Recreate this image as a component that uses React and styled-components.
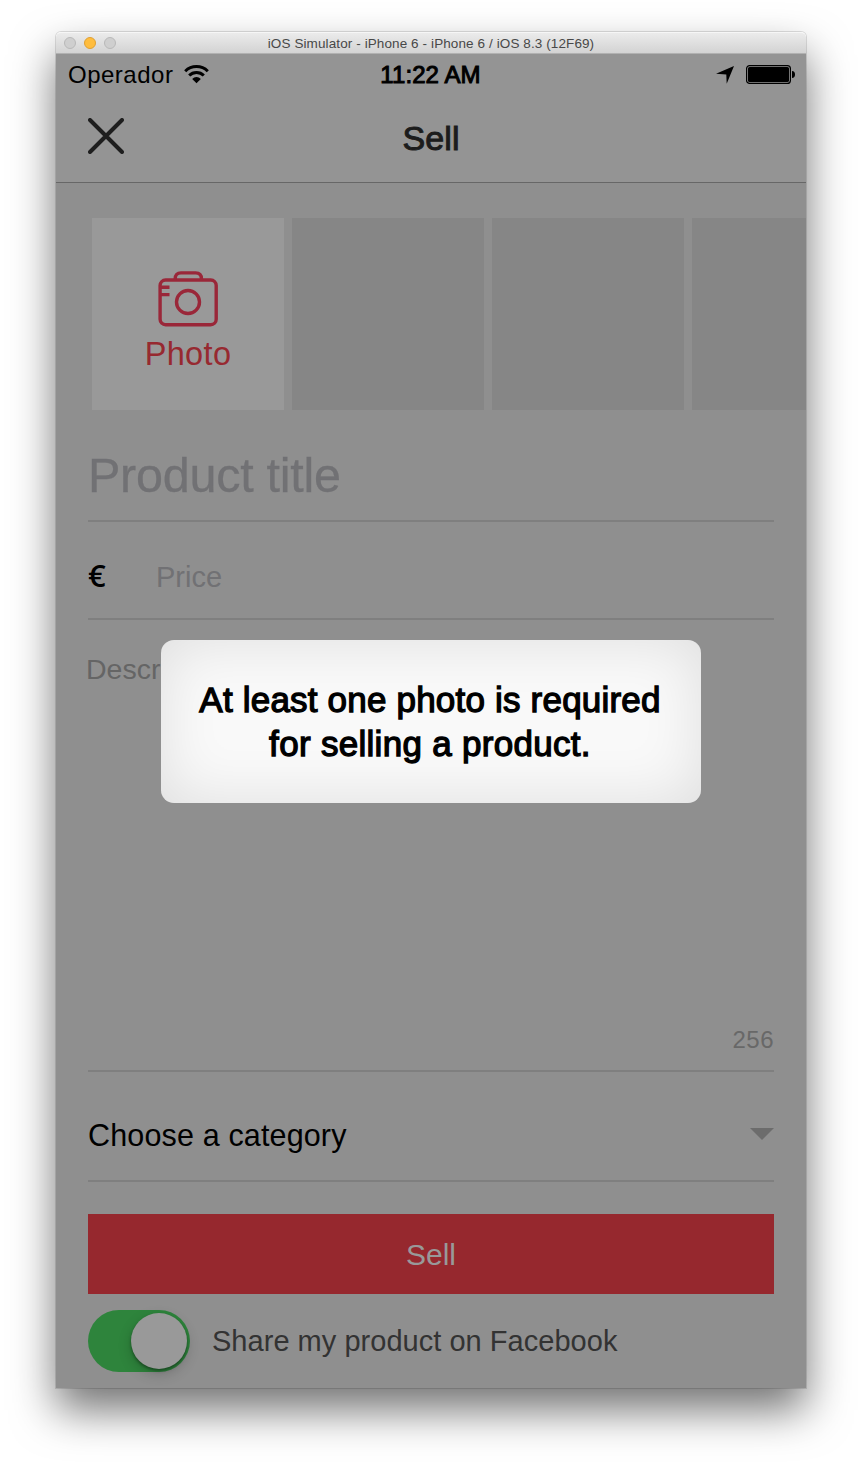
import React from 'react';
import styled, { createGlobalStyle } from 'styled-components';

const GlobalStyle = createGlobalStyle`
  * { box-sizing: border-box; }
  body {
    margin: 0;
    background: #fff;
    font-family: "Liberation Sans", Arial, sans-serif;
  }
`;

const Desktop = styled.main`
  width: 862px;
  height: 1468px;
  padding: 32px 56px 80px;
  overflow: hidden;
`;

const Window = styled.div`
  width: 750px;
  height: 1356px;
  border-radius: 5px 5px 0 0;
  box-shadow: 0 0 0 1px rgba(0, 0, 0, 0.12), 0 22px 44px rgba(0, 0, 0, 0.55);
`;

const TitleBar = styled.header`
  position: relative;
  height: 22px;
  display: flex;
  align-items: center;
  justify-content: center;
  padding-top: 2px;
  border-radius: 5px 5px 0 0;
  background: linear-gradient(#ebebeb, #d3d3d3);
  border-top: 1px solid #f6f6f6;
  border-bottom: 1px solid #b1b1b1;
`;

const Lights = styled.div`
  position: absolute;
  left: 8px;
  top: 4px;
  display: flex;
  gap: 8px;
`;

const Light = styled.span`
  width: 12px;
  height: 12px;
  border-radius: 50%;
  background: ${(p) => (p.$on ? '#ffbd3e' : '#cfcfcf')};
  border: 1px solid ${(p) => (p.$on ? '#e0a032' : '#b9b9b9')};
`;

const Label = styled.span`
  font-size: ${(p) => p.$size}px;
  line-height: 1;
  color: ${(p) => p.$color || '#000'};
  letter-spacing: ${(p) => p.$track || 0}px;
  -webkit-text-stroke: ${(p) => p.$stroke || 0}px currentColor;
  white-space: nowrap;
`;

const Screen = styled.div`
  position: relative;
  height: 1334px;
  display: flex;
  flex-direction: column;
  overflow: hidden;
  background: #8f8f8f;
`;

const StatusBar = styled.div`
  height: 40px;
  display: grid;
  grid-template-columns: 1fr auto 1fr;
  align-items: center;
  padding: 1px 11px 0 12px;
  background: #949494;
`;

const StatusGroup = styled.div`
  display: flex;
  align-items: center;
  justify-content: ${(p) => (p.$end ? 'flex-end' : 'flex-start')};
  gap: ${(p) => p.$gap}px;
`;

const Clock = styled(Label)`
  margin-right: 2px;
`;

const NavBar = styled.div`
  height: 89px;
  display: grid;
  grid-template-columns: 1fr auto 1fr;
  align-items: center;
  padding: 0 32px;
  background: #949494;
  border-bottom: 1px solid #676767;
`;

const CloseIcon = styled.svg`
  display: block;
  margin-bottom: 4px;
`;

const PhotoStrip = styled.div`
  display: flex;
  flex: none;
  gap: 8px;
  padding: 35px 0 0 36px;
`;

const Tile = styled.div`
  flex: none;
  width: 192px;
  height: 192px;
  display: flex;
  flex-direction: column;
  align-items: center;
  padding-top: 52px;
  gap: 11px;
  background: ${(p) => (p.$active ? '#999' : '#868686')};
`;

const Form = styled.div`
  display: flex;
  flex-direction: column;
  padding: 0 32px;
`;

const Field = styled.div`
  height: ${(p) => p.$height}px;
  display: flex;
  align-items: center;
  padding-top: ${(p) => p.$top}px;
  border-bottom: 2px solid #7f7f7f;
`;

const Currency = styled.span`
  width: 68px;
  padding-bottom: 3px;
  font: 600 31px/1 "Open Sans", "Noto Sans", sans-serif;
`;

const DescriptionField = styled.div`
  height: 452px;
  display: flex;
  flex-direction: column;
  justify-content: space-between;
  padding: 35px 0 18px;
  border-bottom: 2px solid #7f7f7f;
`;

const Hint = styled(Label)`
  margin-left: -2px;
`;

const Counter = styled(Label)`
  align-self: flex-end;
`;

const Caret = styled.svg`
  margin: 0 0 2px auto;
`;

const SellButton = styled.button`
  height: 80px;
  margin: 32px 0 16px;
  padding: 1px 0 0;
  border: 0;
  background: #96282e;
  font-family: inherit;
`;

const ShareRow = styled.div`
  display: flex;
  align-items: center;
  gap: 22px;
`;

const Toggle = styled.div`
  width: 102px;
  height: 62px;
  padding: 3px;
  display: flex;
  justify-content: flex-end;
  border-radius: 31px;
  background: #2e843c;
`;

const Knob = styled.div`
  width: 56px;
  height: 56px;
  border-radius: 50%;
  background: #999;
  box-shadow: 0 2px 3px rgba(0, 0, 0, 0.35), 0 5px 14px rgba(0, 0, 0, 0.2);
`;

const Alert = styled.div`
  position: absolute;
  left: 105px;
  top: 586px;
  width: 540px;
  height: 163px;
  display: flex;
  flex-direction: column;
  align-items: center;
  padding: 42px 2px 0 0;
  gap: 9px;
  border-radius: 13px;
  background: #f9f9f9;
  box-shadow: inset 0 0 60px rgba(0, 0, 0, 0.11);
`;

const Wifi = () => (
  <svg width="25" height="19" viewBox="0 0 25 19">
    <g fill="none" stroke="#000" strokeWidth="3">
      <path d="M1.2 6.2a16.2 16.2 0 0 1 22.6 0" />
      <path d="M5.2 10.5a10.3 10.3 0 0 1 14.6 0" />
    </g>
    <path d="M12.5 18.3 8.2 13.9a6 6 0 0 1 8.6 0z" />
  </svg>
);

const LocationArrow = () => (
  <svg width="18" height="18" viewBox="0 0 18 18">
    <path d="M18 0 10.7 17.8 10.3 8.4 0 7.7z" />
  </svg>
);

const Battery = () => (
  <svg width="49" height="19" viewBox="0 0 49 19">
    <rect x=".6" y=".6" width="43.8" height="17.8" rx="3" fill="none" stroke="#000" strokeWidth="1.2" />
    <rect x="2" y="2" width="41" height="15" rx="1.6" />
    <path d="M46 6q3 .3 3 3.5T46 13z" />
  </svg>
);

const Camera = () => (
  <svg width="60" height="57" viewBox="0 0 60 57" fill="none" stroke="#9a2739" strokeWidth="3.4">
    <rect x="2.1" y="10" width="56.1" height="44.7" rx="5.5" />
    <path d="M17.2 10V8.8Q17.2 2.9 23 2.9H37.6Q43.4 2.9 43.4 8.8V10" />
    <circle cx="30" cy="32" r="11.5" />
    <path d="M2 17.3H11.5M2 24.6H11.5" />
  </svg>
);

export default function App() {
  return (
    <Desktop>
      <GlobalStyle />
      <Window>
        <TitleBar>
          <Lights>
            <Light />
            <Light $on />
            <Light />
          </Lights>
          <Label $size={13.5} $track={0.1} $color="#484848">
            iOS Simulator - iPhone 6 - iPhone 6 / iOS 8.3 (12F69)
          </Label>
        </TitleBar>
        <Screen>
          <StatusBar>
            <StatusGroup $gap={11}>
              <Label $size={24} $track={0.5}>Operador</Label>
              <Wifi />
            </StatusGroup>
            <Clock $size={24} $stroke={1} $track={0.1}>11:22 AM</Clock>
            <StatusGroup $end $gap={12}>
              <LocationArrow />
              <Battery />
            </StatusGroup>
          </StatusBar>
          <NavBar>
            <CloseIcon width="36" height="36" viewBox="0 0 36 36">
              <path d="M2 2 34 34M34 2 2 34" stroke="#1e1e1e" strokeWidth="4" strokeLinecap="round" />
            </CloseIcon>
            <Label $size={34} $track={0.1} $stroke={1} $color="#1c1c1c">Sell</Label>
          </NavBar>
          <PhotoStrip>
            <Tile $active>
              <Camera />
              <Label $size={32.5} $track={0.35} $color="#972930">Photo</Label>
            </Tile>
            <Tile />
            <Tile />
            <Tile />
          </PhotoStrip>
          <Form>
            <Field $height={112} $top={21}>
              <Label $size={48.5} $track={-0.25} $stroke={0.3} $color="#717174">Product title</Label>
            </Field>
            <Field $height={98} $top={14}>
              <Currency>€</Currency>
              <Label $size={29} $color="#717174">Price</Label>
            </Field>
            <DescriptionField>
              <Hint $size={28.5} $color="#656565">Description</Hint>
              <Counter $size={24} $track={0.5} $color="#686868">256</Counter>
            </DescriptionField>
            <Field $height={110} $top={18}>
              <Label $size={30.5} $track={0.15}>Choose a category</Label>
              <Caret width="24" height="12" viewBox="0 0 24 12">
                <path d="M0 0H24L12 12z" fill="#6c6c6c" />
              </Caret>
            </Field>
            <SellButton type="button">
              <Label $size={30} $track={0} $color="#999">Sell</Label>
            </SellButton>
            <ShareRow>
              <Toggle>
                <Knob />
              </Toggle>
              <Label $size={29} $track={0.03} $color="#333">Share my product on Facebook</Label>
            </ShareRow>
          </Form>
          <Alert role="alert">
            <Label $size={35} $track={0.2} $stroke={1.3}>At least one photo is required</Label>
            <Label $size={35} $track={0.3} $stroke={1.3}>for selling a product.</Label>
          </Alert>
        </Screen>
      </Window>
    </Desktop>
  );
}
